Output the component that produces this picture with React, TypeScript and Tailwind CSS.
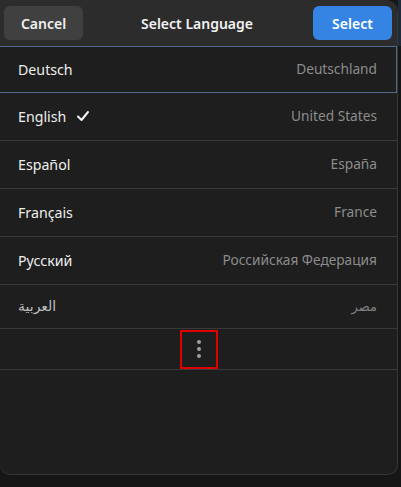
import React from "react";

interface Lang {
  name: string;
  region: string;
  selected?: boolean;
  rtl?: boolean;
  h: string;
}

const langs: Lang[] = [
  { name: "English", region: "United States", selected: true, h: "h-[48px]" },
  { name: "Español", region: "España", h: "h-[48px]" },
  { name: "Français", region: "France", h: "h-[48px]" },
  { name: "Русский", region: "Российская Федерация", h: "h-[48px]" },
  { name: "العربية", region: "مصر", rtl: true, h: "h-[44px]" },
];

const App: React.FC = () => {
  return (
    <div
      className="w-[401px] h-[487px] bg-[#161616] overflow-hidden flex"
      style={{ fontFamily: '"Noto Sans", "Open Sans", sans-serif' }}
    >
      {/* dialogo */}
      <div className="w-[398px] h-[475px] shrink-0 bg-[#1e1e1e] rounded-tr-[12px] rounded-b-[10px] border-r border-b border-[#363636] flex flex-col overflow-hidden">
        {/* cabecalho */}
        <div className="h-[46px] shrink-0 bg-[#2c2c2c] flex items-center justify-between pl-[4px] pr-[5px]">
          <button className="w-[79px] h-[34px] rounded-[6px] bg-[#404040] text-[#f0f0f0] text-[14px] font-semibold">
            Cancel
          </button>
          <div className="text-[14px] font-semibold text-[#f2f2f2] -ml-[2px]">
            Select Language
          </div>
          <button className="w-[79px] h-[34px] rounded-[6px] bg-[#3584e4] text-white text-[14px] font-semibold">
            Select
          </button>
        </div>

        {/* lista */}
        <div className="flex flex-col">
          <div className="h-[47px] flex items-center justify-between pl-[18px] pr-[19px] border border-[#4e6a8c] border-l-0">
            <span className="text-[14.2px] text-[#eeeeee]">Deutsch</span>
            <span className="text-[13.7px] text-[#8c8c8c]">Deutschland</span>
          </div>
          {langs.map((l, i) => (
            <div
              key={i}
              className={`${l.h} flex items-center justify-between pl-[18px] pr-[20px] border-b border-[#383838]`}
            >
              <span
                className={
                  l.rtl
                    ? "text-[14px] text-[#bdbdbd] tracking-[3px] font-['DejaVu_Sans',sans-serif]"
                    : "text-[14.2px] text-[#eeeeee] flex items-center"
                }
              >
                {l.name}
                {l.selected && (
                  <svg width="14" height="12" viewBox="0 0 14 12" className="ml-[10px]">
                    <path
                      d="M2 6.5 L5.5 10 L12 2"
                      stroke="#f2f2f2"
                      strokeWidth="2"
                      fill="none"
                      strokeLinecap="round"
                      strokeLinejoin="round"
                    />
                  </svg>
                )}
              </span>
              <span
                className={
                  l.rtl
                    ? "text-[13px] text-[#808080] tracking-[3px] font-['DejaVu_Sans',sans-serif]"
                    : "text-[13.7px] text-[#8c8c8c]"
                }
              >
                {l.region}
              </span>
            </div>
          ))}
          {/* mais idiomas */}
          <div className="h-[41px] flex items-center justify-center border-b border-[#383838]">
            <div className="w-[38px] h-[39px] border-2 border-[#e00000] flex flex-col items-center justify-center gap-[3px]">
              <span className="w-[4px] h-[4px] rounded-full bg-[#a0a0a0]" />
              <span className="w-[4px] h-[4px] rounded-full bg-[#a0a0a0]" />
              <span className="w-[4px] h-[4px] rounded-full bg-[#a0a0a0]" />
            </div>
          </div>
        </div>
      </div>
      <div className="flex-1 flex flex-col">
        <div className="h-[46px] bg-[#1d2b3b]" />
      </div>
    </div>
  );
};

export default App;
